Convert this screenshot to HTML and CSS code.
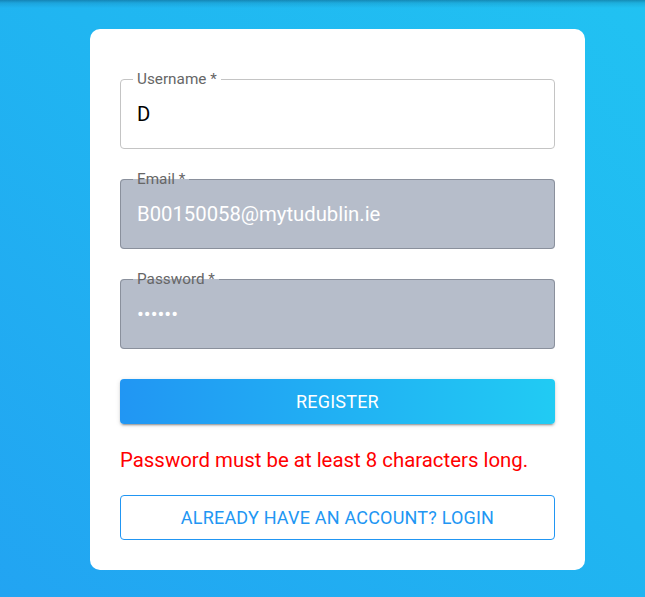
FILE: index.html
```html
<!DOCTYPE html>
<html lang="en">
<head>
<meta charset="utf-8">
<title>Register</title>
<link rel="stylesheet" href="styles.css">
</head>
<body>
<div class="page">
  <form class="card">
    <fieldset class="field">
      <legend class="label">Username *</legend>
      <input class="input" type="text" value="D">
    </fieldset>
    <fieldset class="field filled">
      <legend class="label">Email *</legend>
      <input class="input" type="email" value="B00150058@mytudublin.ie">
    </fieldset>
    <fieldset class="field filled">
      <legend class="label">Password *</legend>
      <input class="input" type="password" value="123456">
    </fieldset>
    <button type="button" class="btn btn-primary">REGISTER</button>
    <p class="error">Password must be at least 8 characters long.</p>
    <button type="button" class="btn btn-outline">ALREADY HAVE AN ACCOUNT? LOGIN</button>
  </form>
</div>
</body>
</html>
```

FILE: styles.css
```css
html, body {
  margin: 0;
  padding: 0;
}
body {
  font-family: Roboto, "Liberation Sans", sans-serif;
}
.page {
  min-height: 597px;
  box-sizing: border-box;
  padding: 29px 0 0 90px;
  background:
    linear-gradient(to bottom, rgba(0, 40, 70, 0.35) 0px, rgba(0, 40, 70, 0.12) 3px, rgba(0, 0, 0, 0) 8px),
    linear-gradient(to top right, #22a4f2 0%, #20b6f1 55%, #21c2f2 100%);
}
.card {
  width: 495px;
  box-sizing: border-box;
  background: #fff;
  border-radius: 10px;
  padding: 41px 30px 30px;
  display: flex;
  flex-direction: column;
}
.field {
  margin: 0 0 21px;
  padding: 0 16px;
  border: 1px solid #c4c4c4;
  border-radius: 4px;
  min-width: 0;
}
.field.filled {
  background: #b6bdca;
  border-color: #8a909c;
}
.label {
  font-size: 15.3px;
  line-height: 18px;
  color: #666;
  padding: 0 4px;
  margin-left: -4px;
}
.input {
  display: block;
  width: 100%;
  box-sizing: border-box;
  border: 0;
  outline: none;
  background: transparent;
  padding: 0;
  margin: 14px 0 22px;
  height: 24px;
  font-family: Roboto, "Liberation Sans", sans-serif;
  font-size: 20.3px;
  color: #000;
}
.filled .input {
  color: #fff;
}
.btn {
  display: block;
  width: 100%;
  height: 45px;
  border-radius: 4px;
  font-family: Roboto, "Liberation Sans", sans-serif;
  font-size: 18px;
  letter-spacing: 0.2px;
  cursor: pointer;
}
.btn-primary {
  margin-top: 9px;
  border: 0;
  color: #fff;
  background: linear-gradient(to right, #2196f3 0%, #21cbf3 100%);
  box-shadow: 0 3px 1px -2px rgba(0, 0, 0, 0.2), 0 2px 2px 0 rgba(0, 0, 0, 0.14), 0 1px 5px 0 rgba(0, 0, 0, 0.12);
}
.btn-outline {
  height: 45px;
  border: 1px solid #2196f3;
  background: #fff;
  color: #2196f3;
}
.error {
  margin: 25px 0 24px;
  font-size: 20.4px;
  line-height: 22px;
  color: #ff0000;
}
```
